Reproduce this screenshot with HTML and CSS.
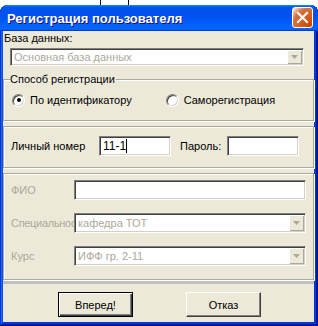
FILE: index.html
```html
<!DOCTYPE html>
<html lang="ru">
<head>
    <meta charset="UTF-8">
    <title>Регистрация пользователя</title>
    <link rel="stylesheet" href="styles.css">
</head>
<body>
    <div class="strip"><span class="tick tick-a"></span><span class="tick tick-b"></span></div>
    <div class="window">
        <div class="titlebar">
            <span class="title">Регистрация пользователя</span>
            <span class="close">
                <svg width="13" height="13" viewBox="0 0 13 13"><path d="M2 2 L11 11 M11 2 L2 11" stroke="#fff" stroke-width="2.2" stroke-linecap="square"/></svg>
            </span>
        </div>
        <div class="client">
            <div class="db-label">База данных:</div>
            <div class="combo combo-db">
                <span class="combo-text">Основная база данных</span>
                <span class="drop"><svg width="7" height="4" viewBox="0 0 7 4"><path d="M0 0 H7 L3.5 4 Z" fill="#aca899"/></svg></span>
            </div>

            <fieldset class="group">
                <legend>Способ регистрации</legend>
                <div class="radios">
                    <span class="radio checked"></span><span class="radio-text">По идентификатору</span>
                    <span class="radio radio-second"></span><span class="radio-text">Саморегистрация</span>
                </div>
            </fieldset>

            <div class="panel panel-login">
                <span class="login-label">Личный номер</span>
                <span class="field field-id">11-1<span class="caret"></span></span>
                <span class="pass-label">Пароль:</span>
                <span class="field field-pass"></span>
            </div>

            <div class="panel panel-info">
                <div class="row">
                    <span class="row-label">ФИО</span>
                    <span class="field field-wide"></span>
                </div>
                <div class="row">
                    <span class="row-label row-label-cut">Специальность</span>
                    <div class="combo combo-wide">
                        <span class="combo-text">кафедра ТОТ</span>
                        <span class="drop"><svg width="7" height="4" viewBox="0 0 7 4"><path d="M0 0 H7 L3.5 4 Z" fill="#aca899"/></svg></span>
                    </div>
                </div>
                <div class="row">
                    <span class="row-label">Курс</span>
                    <div class="combo combo-wide">
                        <span class="combo-text">ИФФ гр. 2-11</span>
                        <span class="drop"><svg width="7" height="4" viewBox="0 0 7 4"><path d="M0 0 H7 L3.5 4 Z" fill="#aca899"/></svg></span>
                    </div>
                </div>
            </div>

            <div class="sep"></div>

            <div class="buttons">
                <button class="btn btn-default">Вперед!</button>
                <button class="btn">Отказ</button>
            </div>
        </div>
    </div>
</body>
</html>
```

FILE: styles.css
```css
body {
    margin: 0;
    background: #fff;
    font-family: "Liberation Sans", Arial, sans-serif;
    font-size: 11px;
    color: #000;
}
.strip {
    height: 5px;
    display: flex;
}
.tick {
    width: 1px;
    background: #000;
}
.tick-a {
    margin-left: 100px;
}
.tick-b {
    margin-left: 27px;
}
.window {
    height: 321px;
    display: flex;
    flex-direction: column;
    background: #0831d9;
    border-radius: 8px 8px 0 0;
    padding: 0 4px 4px 3px;
    box-sizing: border-box;
    box-shadow: inset -1px -1px #00138c, inset 1px 1px #0831d9, inset -2px -2px #001ea0, inset 2px 2px #166aee, inset -3px -3px #003bda, inset 3px 3px #0855dd;
}
.titlebar {
    height: 26px;
    flex: none;
    margin: 0 -4px 0 -3px;
    padding: 0 5px 0 7px;
    display: flex;
    align-items: center;
    justify-content: space-between;
    border-radius: 8px 8px 0 0;
    background: linear-gradient(180deg, #0997ff, #0053ee 8%, #0050ee 40%, #06f 88%, #06f 93%, #005bff 95%, #003dd7 96%, #003dd7);
}
.title {
    color: #fff;
    font-weight: bold;
    font-size: 13px;
    text-shadow: 1px 1px #0f1089;
}
.close {
    width: 19px;
    height: 19px;
    margin-bottom: 2px;
    border: 1px solid #fff;
    border-radius: 3px;
    display: flex;
    align-items: center;
    justify-content: center;
    background: radial-gradient(circle at 90% 90%, #cc4600 0, #dc6527 55%, #cd7546 70%, #ffccb2 90%, #fff 100%);
}
.client {
    flex: 1;
    background: #ece9d8;
    display: flex;
    flex-direction: column;
}
.db-label {
    height: 14px;
    line-height: 14px;
    padding-left: 1px;
}
.combo {
    display: flex;
    background: #fff;
    border: 1px solid;
    border-color: #808080 #fff #fff #808080;
    box-shadow: inset 1px 1px #404040, inset -1px -1px #d4d0c8;
    box-sizing: border-box;
    color: #aca899;
}
.combo-db {
    height: 18px;
    width: 294px;
    margin: 3px 0 0 7px;
}
.combo-text {
    flex: 1;
    padding-left: 3px;
    line-height: 16px;
    white-space: nowrap;
    overflow: hidden;
}
.drop {
    width: 15px;
    margin: 1px 1px 1px 0;
    background: #ece9d8;
    box-shadow: inset 1px 1px #fff, inset -1px -1px #aca899;
    display: flex;
    align-items: center;
    justify-content: center;
}
.group {
    margin: 6px 0 0 0;
    padding: 0 0 0 6px;
    height: 49px;
    box-sizing: border-box;
    border: 1px solid #aca899;
    box-shadow: inset 1px 1px #fff, 1px 1px #fff;
    min-width: 0;
}
.group legend {
    padding: 0 1px 0 0;
    line-height: 14px;
    font-size: 11px;
}
.radios {
    display: flex;
    align-items: center;
    height: 20px;
    margin: 4px 0 0 2px;
}
.radio {
    width: 13px;
    height: 13px;
    border-radius: 50%;
    box-sizing: border-box;
    border: 1px solid;
    border-color: #808080 #fff #fff #808080;
    box-shadow: inset 1px 1px #404040, inset -1px -1px #d4d0c8;
    background: #fff;
    display: flex;
    align-items: center;
    justify-content: center;
}
.radio.checked::after {
    content: "";
    width: 4px;
    height: 4px;
    border-radius: 50%;
    background: #000;
}
.radio-text {
    margin-left: 5px;
}
.radio-second {
    margin-left: 34px;
}
.panel {
    border: 1px solid #aca899;
    box-shadow: inset 1px 1px #fff, 1px 1px #fff;
    box-sizing: border-box;
    margin-top: 5px;
}
.panel-login {
    height: 42px;
    display: flex;
    align-items: center;
    padding: 0 0 2px 7px;
}
.field {
    display: block;
    background: #fff;
    border: 1px solid;
    border-color: #808080 #fff #fff #808080;
    box-shadow: inset 1px 1px #404040, inset -1px -1px #d4d0c8;
    box-sizing: border-box;
    height: 20px;
    line-height: 18px;
    padding-left: 3px;
    font-size: 12px;
}
.login-label {
    width: 88px;
}
.field-id {
    width: 72px;
    display: flex;
    align-items: center;
}
.caret {
    width: 1px;
    height: 14px;
    background: #000;
}
.pass-label {
    margin-left: 9px;
    width: 47px;
}
.field-pass {
    width: 72px;
}
.panel-info {
    height: 107px;
    padding: 6px 0 0 7px;
    display: flex;
    flex-direction: column;
    gap: 13px;
}
.row {
    display: flex;
    align-items: center;
    height: 20px;
    color: #aca899;
}
.row-label {
    width: 63px;
    white-space: nowrap;
    overflow: hidden;
}
.row-label-cut {
    letter-spacing: -0.3px;
}
.field-wide,
.combo-wide {
    width: 232px;
    height: 20px;
}
.combo-wide .combo-text {
    line-height: 18px;
}
.sep {
    height: 3px;
    margin-top: 1px;
    background: #c0c0c0;
}
.buttons {
    display: flex;
    gap: 53px;
    padding-left: 55px;
    margin-top: 8px;
}
.btn {
    width: 75px;
    height: 25px;
    font-family: "Liberation Sans", Arial, sans-serif;
    font-size: 11px;
    color: #000;
    background: #ece9d8;
    border: 1px solid;
    border-color: #fff #404040 #404040 #fff;
    box-shadow: inset -1px -1px #808080;
    padding: 0;
}
.btn-default {
    border: 1px solid #000;
    box-shadow: inset 1px 1px #fff, inset -1px -1px #404040, inset -2px -2px #808080;
}
```
